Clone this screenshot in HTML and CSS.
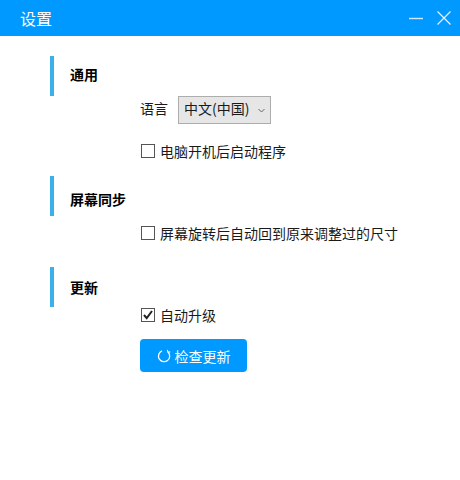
FILE: index.html
```html
<!DOCTYPE html>
<html lang="zh-CN">
<head>
    <meta charset="UTF-8">
    <meta name="viewport" content="width=device-width, initial-scale=1.0">
    <title>设置</title>
    <link rel="stylesheet" href="styles.css">
</head>
<body>
    <!-- 标题栏 -->
    <div class="title-bar">
        <div class="title">设置</div>
        <div class="window-buttons">
            <svg class="win-icon" width="16" height="16" viewBox="0 0 16 16"><path d="M1 8.5H15" stroke="#cfeaff" stroke-width="1.4" fill="none"/></svg>
            <svg class="win-icon" width="16" height="16" viewBox="0 0 16 16"><path d="M1.5 1.5L14.5 14.5M14.5 1.5L1.5 14.5" stroke="#e6f5ff" stroke-width="1.2" fill="none"/></svg>
        </div>
    </div>

    <div class="content">
        <!-- 通用 -->
        <div class="section-head section-general">通用</div>
        <div class="language-row">
            <span class="language-label">语言</span>
            <div class="select">
                <span class="select-value">中文(中国)</span>
                <svg width="7" height="5" viewBox="0 0 7 5"><path d="M0.5 1L3.5 4L6.5 1" stroke="#666" stroke-width="1" fill="none"/></svg>
            </div>
        </div>
        <div class="check-row check-row-general">
            <span class="checkbox"></span>
            <span>电脑开机后启动程序</span>
        </div>

        <!-- 屏幕同步 -->
        <div class="section-head section-sync">屏幕同步</div>
        <div class="check-row check-row-sync">
            <span class="checkbox"></span>
            <span>屏幕旋转后自动回到原来调整过的尺寸</span>
        </div>

        <!-- 更新 -->
        <div class="section-head">更新</div>
        <div class="check-row check-row-update">
            <span class="checkbox">
                <svg width="14" height="14" viewBox="0 0 14 14"><path d="M3 7L5.7 10.2L11 3" stroke="#222" stroke-width="2" fill="none"/></svg>
            </span>
            <span>自动升级</span>
        </div>
        <button class="update-btn">
            <svg width="14" height="14" viewBox="0 0 14 14"><path d="M5 1.9A5.6 5.6 0 1 0 11 3.1" stroke="#fff" stroke-width="1.3" fill="none"/><path d="M10.3 0.8L10.9 3.2L13.2 2.9" stroke="#fff" stroke-width="1.1" fill="none"/></svg>
            <span>检查更新</span>
        </button>
    </div>
</body>
</html>
```

FILE: styles.css
```css
body {
    margin: 0;
    background: #fff;
    color: #1a1a1a;
    font-family: "Noto Sans CJK SC", "Liberation Sans", sans-serif;
    font-size: 14px;
}

/* 标题栏 */
.title-bar {
    display: flex;
    justify-content: space-between;
    align-items: center;
    height: 36px;
    padding: 0 8px 0 20px;
    background: #0099ff;
    color: #fff;
}

.title {
    font-size: 16px;
}

.window-buttons {
    display: flex;
    gap: 12px;
}

/* 内容 */
.content {
    padding: 20px 0 0 50px;
}

.section-head {
    height: 40px;
    line-height: 40px;
    padding-left: 16px;
    border-left: 4px solid #3cb0e8;
    color: #000;
    font-weight: bold;
    font-size: 14px;
}

.section-general {
    line-height: 37px;
}

.section-sync {
    line-height: 46px;
}

.language-row {
    display: flex;
    align-items: center;
    gap: 10px;
    height: 28px;
    margin-left: 90px;
}

.language-label {
    padding-bottom: 5px;
}

.select {
    display: flex;
    justify-content: space-between;
    align-items: center;
    box-sizing: border-box;
    width: 93px;
    height: 28px;
    padding: 0 5px;
    background: #e6e6e6;
    border: 1px solid #adadad;
}

.select-value {
    padding-bottom: 4px;
}

.check-row {
    display: flex;
    align-items: center;
    gap: 5px;
    height: 20px;
    margin-left: 91px;
}

.check-row-general {
    margin-top: 17px;
    margin-bottom: 15px;
}

.check-row-sync {
    margin-top: 7px;
    margin-bottom: 24px;
}

.check-row-update {
    margin-top: -2px;
}

.checkbox {
    display: flex;
    box-sizing: border-box;
    width: 14px;
    height: 14px;
    border: 1px solid #555;
    background: #fff;
}

.checkbox svg {
    flex: none;
    margin: -1px;
}

.update-btn {
    display: flex;
    justify-content: center;
    align-items: center;
    gap: 4px;
    width: 107px;
    height: 33px;
    margin: 14px 0 0 90px;
    padding: 0;
    border: none;
    border-radius: 4px;
    background: #0099ff;
    color: #fff;
    font-family: inherit;
    font-size: 14px;
}
```
